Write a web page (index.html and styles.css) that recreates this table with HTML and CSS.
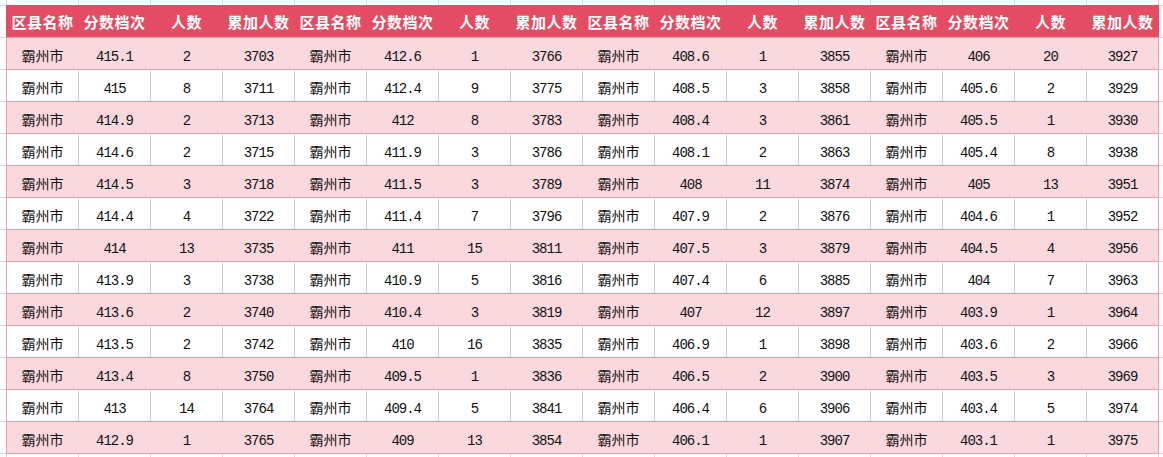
FILE: index.html
```html
<!DOCTYPE html>
<html lang="zh">
<head>
<meta charset="utf-8">
<title>分数档次</title>
<link rel="stylesheet" href="styles.css">
</head>
<body>
<div class="sheet">
<table class="score-table">
<colgroup>
<col><col><col><col><col><col><col><col><col><col><col><col><col><col><col><col>
</colgroup>
<thead>
<tr>
<th>区县名称</th><th>分数档次</th><th>人数</th><th>累加人数</th>
<th>区县名称</th><th>分数档次</th><th>人数</th><th>累加人数</th>
<th>区县名称</th><th>分数档次</th><th>人数</th><th>累加人数</th>
<th>区县名称</th><th>分数档次</th><th>人数</th><th>累加人数</th>
</tr>
</thead>
<tbody>
<tr class="odd"><td class="cn">霸州市</td><td>415.1</td><td>2</td><td>3703</td><td class="cn">霸州市</td><td>412.6</td><td>1</td><td>3766</td><td class="cn">霸州市</td><td>408.6</td><td>1</td><td>3855</td><td class="cn">霸州市</td><td>406</td><td>20</td><td>3927</td></tr>
<tr class="even"><td class="cn">霸州市</td><td>415</td><td>8</td><td>3711</td><td class="cn">霸州市</td><td>412.4</td><td>9</td><td>3775</td><td class="cn">霸州市</td><td>408.5</td><td>3</td><td>3858</td><td class="cn">霸州市</td><td>405.6</td><td>2</td><td>3929</td></tr>
<tr class="odd"><td class="cn">霸州市</td><td>414.9</td><td>2</td><td>3713</td><td class="cn">霸州市</td><td>412</td><td>8</td><td>3783</td><td class="cn">霸州市</td><td>408.4</td><td>3</td><td>3861</td><td class="cn">霸州市</td><td>405.5</td><td>1</td><td>3930</td></tr>
<tr class="even"><td class="cn">霸州市</td><td>414.6</td><td>2</td><td>3715</td><td class="cn">霸州市</td><td>411.9</td><td>3</td><td>3786</td><td class="cn">霸州市</td><td>408.1</td><td>2</td><td>3863</td><td class="cn">霸州市</td><td>405.4</td><td>8</td><td>3938</td></tr>
<tr class="odd"><td class="cn">霸州市</td><td>414.5</td><td>3</td><td>3718</td><td class="cn">霸州市</td><td>411.5</td><td>3</td><td>3789</td><td class="cn">霸州市</td><td>408</td><td>11</td><td>3874</td><td class="cn">霸州市</td><td>405</td><td>13</td><td>3951</td></tr>
<tr class="even"><td class="cn">霸州市</td><td>414.4</td><td>4</td><td>3722</td><td class="cn">霸州市</td><td>411.4</td><td>7</td><td>3796</td><td class="cn">霸州市</td><td>407.9</td><td>2</td><td>3876</td><td class="cn">霸州市</td><td>404.6</td><td>1</td><td>3952</td></tr>
<tr class="odd"><td class="cn">霸州市</td><td>414</td><td>13</td><td>3735</td><td class="cn">霸州市</td><td>411</td><td>15</td><td>3811</td><td class="cn">霸州市</td><td>407.5</td><td>3</td><td>3879</td><td class="cn">霸州市</td><td>404.5</td><td>4</td><td>3956</td></tr>
<tr class="even"><td class="cn">霸州市</td><td>413.9</td><td>3</td><td>3738</td><td class="cn">霸州市</td><td>410.9</td><td>5</td><td>3816</td><td class="cn">霸州市</td><td>407.4</td><td>6</td><td>3885</td><td class="cn">霸州市</td><td>404</td><td>7</td><td>3963</td></tr>
<tr class="odd"><td class="cn">霸州市</td><td>413.6</td><td>2</td><td>3740</td><td class="cn">霸州市</td><td>410.4</td><td>3</td><td>3819</td><td class="cn">霸州市</td><td>407</td><td>12</td><td>3897</td><td class="cn">霸州市</td><td>403.9</td><td>1</td><td>3964</td></tr>
<tr class="even"><td class="cn">霸州市</td><td>413.5</td><td>2</td><td>3742</td><td class="cn">霸州市</td><td>410</td><td>16</td><td>3835</td><td class="cn">霸州市</td><td>406.9</td><td>1</td><td>3898</td><td class="cn">霸州市</td><td>403.6</td><td>2</td><td>3966</td></tr>
<tr class="odd"><td class="cn">霸州市</td><td>413.4</td><td>8</td><td>3750</td><td class="cn">霸州市</td><td>409.5</td><td>1</td><td>3836</td><td class="cn">霸州市</td><td>406.5</td><td>2</td><td>3900</td><td class="cn">霸州市</td><td>403.5</td><td>3</td><td>3969</td></tr>
<tr class="even"><td class="cn">霸州市</td><td>413</td><td>14</td><td>3764</td><td class="cn">霸州市</td><td>409.4</td><td>5</td><td>3841</td><td class="cn">霸州市</td><td>406.4</td><td>6</td><td>3906</td><td class="cn">霸州市</td><td>403.4</td><td>5</td><td>3974</td></tr>
<tr class="odd"><td class="cn">霸州市</td><td>412.9</td><td>1</td><td>3765</td><td class="cn">霸州市</td><td>409</td><td>13</td><td>3854</td><td class="cn">霸州市</td><td>406.1</td><td>1</td><td>3907</td><td class="cn">霸州市</td><td>403.1</td><td>1</td><td>3975</td></tr>
</tbody>
</table>
</div>
</body>
</html>
```
FILE: styles.css
```css
html, body {
  margin: 0;
  padding: 0;
}
body {
  width: 1163px;
  height: 457px;
  overflow: hidden;
  background-color: #ffffff;
  background-image:
    repeating-linear-gradient(to right, #d3d8e6 0, #d3d8e6 1px, transparent 1px, transparent 72px),
    repeating-linear-gradient(to bottom, #d3d8e6 0, #d3d8e6 1px, transparent 1px, transparent 32px);
  background-position: 6px 0, 0 5px;
  font-family: "Noto Sans CJK SC", "Liberation Sans", sans-serif;
}
.sheet {
  padding: 5px 0 0 6px;
}
.score-table {
  border-collapse: collapse;
  table-layout: fixed;
  width: 1152px;
  background: #ffffff;
}
.score-table col {
  width: 72px;
}
.score-table tr {
  height: 32px;
}
.score-table th {
  padding: 0;
  vertical-align: middle;
  background: #e34c62;
  color: #ffffff;
  font-size: 15px;
  font-weight: bold;
  letter-spacing: 0.5px;
  text-align: center;
  border: 1px solid #e34c62;
  border-bottom-color: #e8a0aa;
  white-space: nowrap;
}
.score-table td {
  padding: 6px 0 0 0;
  vertical-align: middle;
  text-align: center;
  font-family: "Liberation Mono", monospace;
  font-size: 14px;
  line-height: 16px;
  letter-spacing: -1px;
  color: #111111;
  border-top: 1px solid #e8a0aa;
  border-bottom: 1px solid #e8a0aa;
  border-left: 1px solid #c6cde0;
  border-right: 1px solid #c6cde0;
  white-space: nowrap;
}
.score-table td.cn {
  padding: 2px 0 0 0;
  font-family: "Noto Sans CJK SC", sans-serif;
  font-size: 14px;
  line-height: 20px;
  letter-spacing: 0;
}
.score-table tr.odd td {
  background: #f9d8de;
  border-left-color: #f9d8de;
  border-right-color: #f9d8de;
}
.score-table tr td:first-child,
.score-table tr.odd td:first-child {
  border-left-color: #e8a0aa;
}
.score-table tr td:last-child,
.score-table tr.odd td:last-child {
  border-right-color: #e8a0aa;
}
```
